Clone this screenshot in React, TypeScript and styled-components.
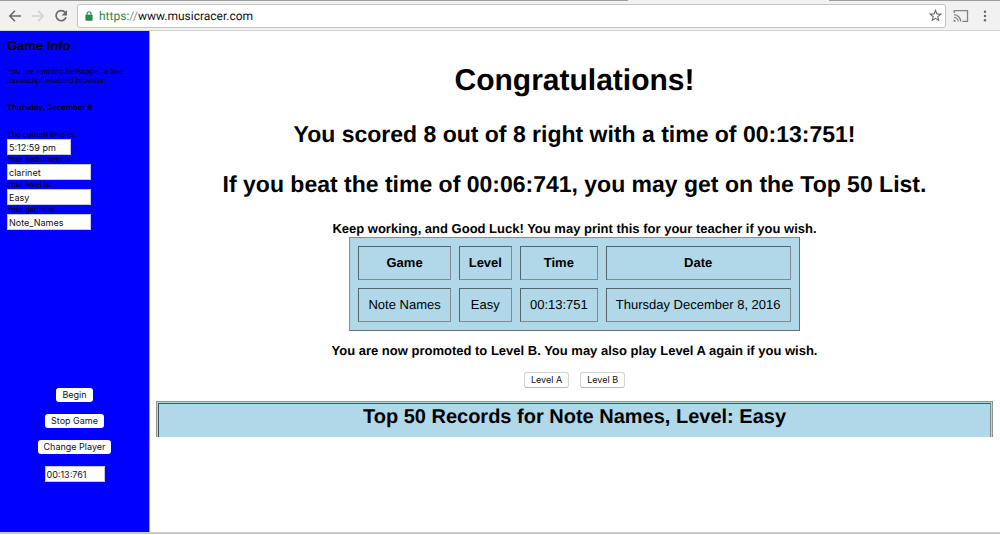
import React from "react";
import styled, { createGlobalStyle } from "styled-components";

const GlobalStyle = createGlobalStyle`
  * { box-sizing: border-box; }
  body {
    margin: 0;
    background: #fff;
    color: #000;
    font-family: "Liberation Sans", Arial, Helvetica, sans-serif;
    text-rendering: geometricPrecision;
  }
  h1, h2, p { margin: 0; }
`;

const Window = styled.div`
  display: flex;
  flex-direction: column;
  min-height: 100vh;
`;

const TabEdge = styled.div`
  display: grid;
  grid-template-columns: 628fr 201fr 171fr;
  height: 1px;
  background: #9d9b9d;
`;

const ActiveTab = styled.span`
  grid-column: 2;
  background: #f1f1f1;
`;

const Toolbar = styled.header`
  display: flex;
  align-items: center;
  height: 30px;
  padding: 0 7px;
  background: #f1f1f1;
  border-bottom: 1px solid #d2d2d2;
`;

const ToolButton = styled.button`
  display: flex;
  align-items: center;
  justify-content: center;
  width: 16px;
  height: 16px;
  padding: 0;
  border: 0;
  background: none;
  color: #6b6b6b;
  &:disabled { color: #d0d0d0; }
`;

const NavButtons = styled.nav`
  display: flex;
  gap: 7px;
  margin-right: 8px;
`;

const AddressBar = styled.div`
  display: flex;
  flex: 1;
  align-items: center;
  height: 24px;
  padding: 0 2px 0 7px;
  background: #fff;
  border: 1px solid #c4c4c4;
  border-radius: 3px;
`;

const Address = styled.a`
  flex: 1;
  margin-left: 6px;
  color: #111;
  font: 12px/16px Roboto, sans-serif;
  text-decoration: none;
`;

const Scheme = styled.span`
  color: #268a4c;
`;

const Slashes = styled.span`
  color: #8c8c8c;
`;

const Actions = styled.div`
  display: flex;
  gap: 8px;
  margin-left: 7px;
`;

const Frames = styled.div`
  display: grid;
  grid-template-columns: 15% 1fr;
  flex: 1;
  border-bottom: 2px solid #c9c9c9;
  margin-bottom: 1px;
`;

const Sidebar = styled.aside`
  display: flex;
  flex-direction: column;
  padding: 7px 7px 50px;
  background: #0000ff;
  border-right: 1px solid #9c9cf0;
`;

const SidebarTitle = styled.h2`
  font-size: 13px;
  line-height: 15px;
`;

const Note = styled.p`
  margin-top: 14px;
  font-size: 8px;
  line-height: 9px;
`;

const Today = styled.p`
  margin: 18px 0;
  font-size: 8px;
  line-height: 9px;
  font-weight: bold;
`;

const Field = styled.label`
  display: flex;
  flex-direction: column;
  align-items: flex-start;
  font-size: 8px;
  line-height: 9px;
`;

const TextBox = styled.input<{ $width: number }>`
  width: ${(p) => p.$width}px;
  height: 16px;
  padding: 0 1px;
  border: 1px solid #c8c8d8;
  background: #fff;
  color: #111;
  font: 9px/12px Inter, sans-serif;
`;

const Controls = styled.div`
  display: flex;
  flex-direction: column;
  align-items: center;
  gap: 12px;
  margin-top: auto;
`;

const Button = styled.button`
  height: 14px;
  padding: 0 6px;
  border: 0;
  border-radius: 3px;
  background: #fff;
  color: #111;
  font: 9px/14px Inter, sans-serif;
`;

const LevelButton = styled(Button)`
  height: 16px;
  border: 1px solid #d4d4d4;
  border-bottom-color: #bcbcbc;
`;

const Main = styled.main`
  display: flex;
  flex-direction: column;
  align-items: center;
  padding: 32px 7px 0 6px;
  text-align: center;
`;

const Title = styled.h1`
  font-size: 30px;
  line-height: 36px;
`;

const Result = styled.h2`
  margin-top: 21px;
  font-size: 23px;
  line-height: 29px;
`;

const Scores = styled.section`
  display: flex;
  flex-direction: column;
  align-items: center;
  margin-top: 22px;
`;

const Message = styled.p`
  font-size: 13px;
  line-height: 16px;
  font-weight: bold;
`;

const ScoreTable = styled.table`
  margin-bottom: 12px;
  background: #b0d8e8;
  border: 1px solid #808080;
  border-color: #8c8c8c #6c6c6c #6c6c6c #8c8c8c;
  border-collapse: separate;
  border-spacing: 8px;
  font-size: 13px;
  line-height: 16px;

  th, td {
    height: 34px;
    padding: 8px 9px;
    border: 1px solid;
    border-color: #52646c #808c90 #808c90 #52646c;
    white-space: nowrap;
  }
`;

const Levels = styled.div`
  display: flex;
  gap: 11px;
  margin: 13px 0;
`;

const Records = styled.section`
  align-self: stretch;
  height: 36px;
  padding: 1px 1px 0;
  background: #b0d8e8;
  border: 1px solid #8c9498;
  border-bottom: 0;
`;

const RecordsTitle = styled.h2`
  height: 34px;
  border: 1px solid #46545a;
  border-right-color: #7c888c;
  border-bottom: 0;
  font-size: 20px;
  line-height: 26px;
`;

const scores = [
  { game: "Note Names", level: "Easy", time: "00:13:751", date: "Thursday December 8, 2016" },
];

const details = [
  { label: "The current time is:", value: "5:12:59 pm", width: 64 },
  { label: "Your instrument is:", value: "clarinet", width: 84 },
  { label: "Your level is:", value: "Easy", width: 84 },
  { label: "Your game is:", value: "Note_Names", width: 84 },
];

const BackIcon = () => (
  <svg width="14" height="14" viewBox="0 0 14 14" fill="none" stroke="currentColor" strokeWidth="1.6">
    <path d="M13 7H2M7 1.8L1.8 7L7 12.2" />
  </svg>
);

const ForwardIcon = () => (
  <svg width="14" height="14" viewBox="0 0 14 14" fill="none" stroke="currentColor" strokeWidth="1.6">
    <path d="M1 7h11M7 1.8L12.2 7L7 12.2" />
  </svg>
);

const ReloadIcon = () => (
  <svg width="14" height="14" viewBox="0 0 14 14" fill="none" stroke="currentColor" strokeWidth="1.7">
    <path d="M11.2 3.5A5.1 5.1 0 1 0 12 8.3" />
    <path d="M13 1v5.4H7.6z" fill="currentColor" stroke="none" />
  </svg>
);

const LockIcon = () => (
  <svg width="8" height="10" viewBox="0 0 8 10" fill="none">
    <path d="M2 4.5V2.8a2 2 0 0 1 4 0v1.7" stroke="#268a4c" strokeWidth="1.1" />
    <rect x="0.4" y="3.8" width="7.2" height="6" rx="0.7" fill="#268a4c" />
  </svg>
);

const StarIcon = () => (
  <svg width="13" height="13" viewBox="0 0 13 13" fill="none" stroke="#666" strokeWidth="1.1">
    <path d="M6.5 1.4l1.4 3.5 3.9.3-3 2.5.9 3.7-3.2-2-3.2 2 .9-3.7-3-2.5 3.9-.3z" />
  </svg>
);

const CastIcon = () => (
  <svg width="16" height="14" viewBox="0 0 16 14" fill="none" stroke="#858585" strokeWidth="1.3">
    <path d="M1.2 4V1.7h13.3v10.6H9.4" />
    <path d="M1 5.7a7 7 0 0 1 6.7 6.9M1 8.3a4.3 4.3 0 0 1 4.2 4.3" />
    <path d="M.6 10.5a2.2 2.2 0 0 1 2.2 2.2H.6z" fill="#858585" stroke="none" />
  </svg>
);

const MenuIcon = () => (
  <svg width="4" height="12" viewBox="0 0 4 12" fill="#666">
    <circle cx="2" cy="1.7" r="1.2" />
    <circle cx="2" cy="6" r="1.2" />
    <circle cx="2" cy="10.3" r="1.2" />
  </svg>
);

export default function App() {
  return (
    <Window>
      <GlobalStyle />
      <TabEdge>
        <ActiveTab />
      </TabEdge>
      <Toolbar>
        <NavButtons>
          <ToolButton aria-label="Back"><BackIcon /></ToolButton>
          <ToolButton aria-label="Forward" disabled><ForwardIcon /></ToolButton>
          <ToolButton aria-label="Reload"><ReloadIcon /></ToolButton>
        </NavButtons>
        <AddressBar>
          <LockIcon />
          <Address href="#">
            <Scheme>https:</Scheme>
            <Slashes>//</Slashes>www.musicracer.com
          </Address>
          <ToolButton aria-label="Bookmark"><StarIcon /></ToolButton>
        </AddressBar>
        <Actions>
          <ToolButton aria-label="Cast"><CastIcon /></ToolButton>
          <ToolButton aria-label="Menu"><MenuIcon /></ToolButton>
        </Actions>
      </Toolbar>
      <Frames>
        <Sidebar>
          <SidebarTitle>Game Info</SidebarTitle>
          <Note>
            You are running Netscape, a fine
            <br />
            Javascript enabled browser.
          </Note>
          <Today>Thursday, December 8</Today>
          {details.map((d) => (
            <Field key={d.label}>
              {d.label}
              <TextBox $width={d.width} defaultValue={d.value} />
            </Field>
          ))}
          <Controls>
            <Button>Begin</Button>
            <Button>Stop Game</Button>
            <Button>Change Player</Button>
            <TextBox $width={60} aria-label="Elapsed time" defaultValue="00:13:761" />
          </Controls>
        </Sidebar>
        <Main>
          <Title>Congratulations!</Title>
          <Result>You scored 8 out of 8 right with a time of 00:13:751!</Result>
          <Result>If you beat the time of 00:06:741, you may get on the Top 50 List.</Result>
          <Scores>
            <Message>Keep working, and Good Luck! You may print this for your teacher if you wish.</Message>
            <ScoreTable>
              <thead>
                <tr>
                  <th>Game</th>
                  <th>Level</th>
                  <th>Time</th>
                  <th>Date</th>
                </tr>
              </thead>
              <tbody>
                {scores.map((s) => (
                  <tr key={s.time}>
                    <td>{s.game}</td>
                    <td>{s.level}</td>
                    <td>{s.time}</td>
                    <td>{s.date}</td>
                  </tr>
                ))}
              </tbody>
            </ScoreTable>
            <Message>You are now promoted to Level B. You may also play Level A again if you wish.</Message>
          </Scores>
          <Levels>
            <LevelButton>Level A</LevelButton>
            <LevelButton>Level B</LevelButton>
          </Levels>
          <Records>
            <RecordsTitle>Top 50 Records for Note Names, Level: Easy</RecordsTitle>
          </Records>
        </Main>
      </Frames>
    </Window>
  );
}
